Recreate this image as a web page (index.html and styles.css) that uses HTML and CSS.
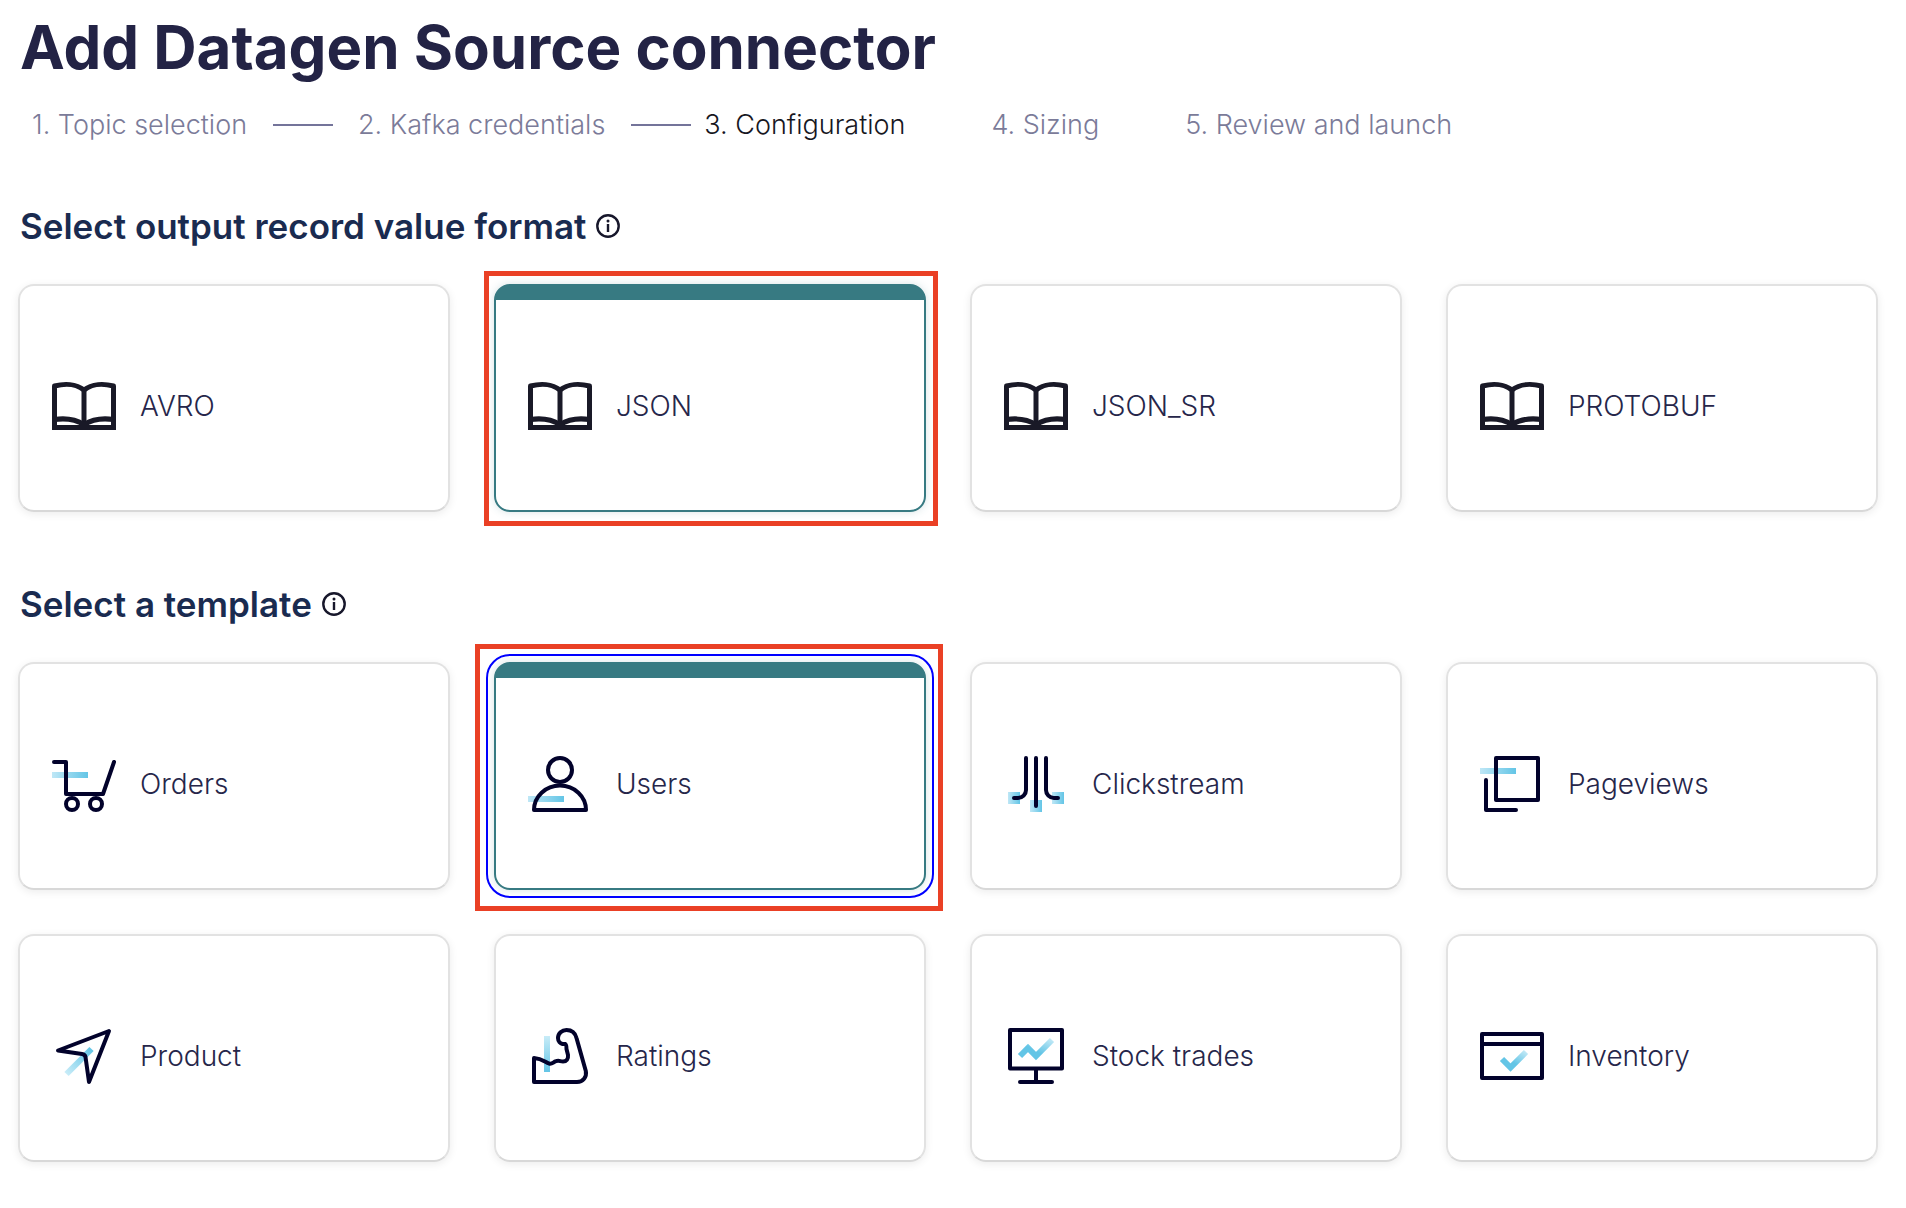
FILE: index.html
```html
<!DOCTYPE html>
<html lang="en">
<head>
<meta charset="utf-8">
<title>Add Datagen Source connector</title>
<meta name="viewport" content="width=device-width, initial-scale=1">
<link rel="stylesheet" href="styles.css">
</head>
<body>
<svg class="defs" width="0" height="0" aria-hidden="true">
  <defs>
    <linearGradient id="fade-right" x1="0" y1="0" x2="1" y2="0">
      <stop offset="0" stop-color="#bfe7f6"/><stop offset="1" stop-color="#63c5e6"/>
    </linearGradient>
    <linearGradient id="fade-down" x1="0" y1="0" x2="0" y2="1">
      <stop offset="0" stop-color="#c8ecf8"/><stop offset="1" stop-color="#63c5e6"/>
    </linearGradient>
    <linearGradient id="fade-up" x1="0" y1="1" x2="1" y2="0">
      <stop offset="0" stop-color="#c8ecf8"/><stop offset="1" stop-color="#63c5e6"/>
    </linearGradient>
    <linearGradient id="fade-out" x1="0" y1="1" x2="1" y2="0">
      <stop offset="0.4" stop-color="#63c5e6"/><stop offset="1" stop-color="#c0e8f6"/>
    </linearGradient>
    <symbol id="book" viewBox="0 0 64 64">
      <g fill="none" stroke="#191927" stroke-width="5" stroke-linejoin="round">
        <path d="M2.500 46V12C12 9.500 24 9.500 32 16C40 9.500 52 9.500 61.500 12V46"/>
        <path d="M32 16V50"/>
        <path d="M2.500 45.500C13 44 24 45.500 32 50.500C40 45.500 51 44 61.500 45.500"/>
        <path d="M2.500 44V53.500H61.500V44" stroke-linejoin="miter"/>
      </g>
    </symbol>
    <symbol id="info" viewBox="0 0 24 24">
      <circle cx="12" cy="12" r="10.700" fill="none" stroke="#17172b" stroke-width="2.400"/>
      <circle cx="12" cy="7" r="1.500" fill="#17172b"/>
      <path d="M12 10V18" stroke="#17172b" stroke-width="2.400"/>
    </symbol>
  </defs>
</svg>

<main class="page">
  <h1 class="title">Add Datagen Source connector</h1>

  <ol class="steps">
    <li class="step step-linked">1. Topic selection</li>
    <li class="step step-linked">2. Kafka credentials</li>
    <li class="step step-current" aria-current="step">3. Configuration</li>
    <li class="step">4. Sizing</li>
    <li class="step">5. Review and launch</li>
  </ol>

  <section class="group" role="radiogroup" aria-labelledby="format-heading">
    <div class="heading-row">
      <h2 class="heading" id="format-heading">Select output record value format</h2>
      <button class="info" type="button" aria-label="About output formats"><svg><use href="#info"/></svg></button>
    </div>
    <div class="cards">
      <label class="card">
        <input class="card-input" type="radio" name="format" value="avro">
        <svg class="icon"><use href="#book"/></svg>
        <span>AVRO</span>
      </label>
      <label class="card">
        <input class="card-input" type="radio" name="format" value="json" checked>
        <svg class="icon"><use href="#book"/></svg>
        <span>JSON</span>
        <i class="callout callout-format"></i>
      </label>
      <label class="card">
        <input class="card-input" type="radio" name="format" value="json_sr">
        <svg class="icon"><use href="#book"/></svg>
        <span>JSON_SR</span>
      </label>
      <label class="card">
        <input class="card-input" type="radio" name="format" value="protobuf">
        <svg class="icon"><use href="#book"/></svg>
        <span>PROTOBUF</span>
      </label>
    </div>
  </section>

  <section class="group" role="radiogroup" aria-labelledby="template-heading">
    <div class="heading-row">
      <h2 class="heading" id="template-heading">Select a template</h2>
      <button class="info" type="button" aria-label="About templates"><svg><use href="#info"/></svg></button>
    </div>
    <div class="cards">
      <label class="card">
        <input class="card-input" type="radio" name="template" value="orders">
        <svg class="icon line-icon" viewBox="0 0 64 64">
          <rect class="tint" x="0" y="20" width="36" height="6"/>
          <path d="M2 10H14V42H51L62 10"/>
          <circle cx="20" cy="52" r="6"/>
          <circle cx="44" cy="52" r="6"/>
        </svg>
        <span>Orders</span>
      </label>
      <label class="card is-focused">
        <input class="card-input" type="radio" name="template" value="users" checked>
        <svg class="icon line-icon" viewBox="0 0 64 64">
          <rect class="tint" x="0" y="44" width="36" height="6"/>
          <circle cx="32" cy="18" r="12"/>
          <path d="M6 58A26 24.500 0 0 1 58 58Z"/>
        </svg>
        <span>Users</span>
        <i class="callout callout-template"></i>
      </label>
      <label class="card">
        <input class="card-input" type="radio" name="template" value="clickstream">
        <svg class="icon line-icon" viewBox="0 0 64 64">
          <rect class="tint" x="4" y="40" width="12" height="12"/>
          <rect class="tint" x="26" y="48" width="12" height="12"/>
          <rect class="tint" x="48" y="40" width="12" height="12"/>
          <path d="M22 6V38A8 8 0 0 1 14 46H10M32 6V54M42 6V38A8 8 0 0 0 50 46H54"/>
        </svg>
        <span>Clickstream</span>
      </label>
      <label class="card">
        <input class="card-input" type="radio" name="template" value="pageviews">
        <svg class="icon line-icon" viewBox="0 0 64 64">
          <rect class="tint" x="0" y="16" width="36" height="6"/>
          <path d="M16 6H58V48H16ZM6 28V58H36"/>
        </svg>
        <span>Pageviews</span>
      </label>
      <label class="card">
        <input class="card-input" type="radio" name="template" value="product">
        <svg class="icon line-icon" viewBox="0 0 64 64">
          <path class="tint-line" stroke="url(#fade-up)" d="M14.500 50L39.500 25"/>
          <path d="M57 7L6 26.500L30 30Q33 30.500 33.500 33L37 58Z"/>
        </svg>
        <span>Product</span>
      </label>
      <label class="card">
        <input class="card-input" type="radio" name="template" value="ratings">
        <svg class="icon line-icon" viewBox="0 0 64 64">
          <rect fill="url(#fade-down)" stroke="none" x="16" y="12" width="6" height="36"/>
          <path d="M6 34V58H49C55 58 59 53 57.800 47L48.500 14C47 8 43 6 38.500 6C34 6 30 9.500 30 14C30 17.500 32.500 19.500 34.500 20H37C38.500 20.500 38.500 23 38.500 25L40 31C40.500 35 38.500 37.500 35 37.500C32 37.500 31 36 28 37.200C25 38.200 24 40.500 21 39.500C17 38 14 34.500 6 34Z"/>
        </svg>
        <span>Ratings</span>
      </label>
      <label class="card">
        <input class="card-input" type="radio" name="template" value="stock">
        <svg class="icon line-icon" viewBox="0 0 64 64">
          <path class="tint-line" stroke="url(#fade-out)" d="M16 32L24 24L32 32L48 16"/>
          <path d="M6 6H58V44.500H6ZM32 46V58M16 58H48"/>
        </svg>
        <span>Stock trades</span>
      </label>
      <label class="card">
        <input class="card-input" type="radio" name="template" value="inventory">
        <svg class="icon line-icon" viewBox="0 0 64 64">
          <path class="tint-line" stroke="url(#fade-out)" d="M22 35L30.500 43.500L46 28"/>
          <path d="M2 10H62V54H2ZM2 20H62"/>
        </svg>
        <span>Inventory</span>
      </label>
    </div>
  </section>
</main>
</body>
</html>
```
FILE: styles.css
```css
* {
  box-sizing: border-box;
}

body {
  margin: 0;
  background: #fff;
  color: #26264a;
  font-family: Inter, "Liberation Sans", sans-serif;
}

.defs {
  position: absolute;
}

.page {
  padding: 11px 28px 44px 18px;
}

.title {
  margin: 0 2px;
  color: #232345;
  font-size: 60px;
  font-weight: 700;
  line-height: 72px;
}

.steps {
  display: flex;
  align-items: center;
  margin: 26px 0 0;
  padding: 0 14px;
  list-style: none;
  color: #7b7b99;
  font-size: 27px;
  font-weight: 300;
  line-height: 32px;
}

.step {
  display: flex;
  align-items: center;
  margin-right: 86px;
  white-space: nowrap;
}

.step-linked {
  margin-right: 25px;
}

.step-linked::after {
  content: "";
  width: 60px;
  height: 2px;
  margin-left: 26px;
  background: #74749a;
}

.step-current {
  margin-left: -12px;
  color: #17171f;
}

.group {
  margin-top: 63px;
}

.group + .group {
  margin-top: 70px;
}

.heading-row {
  display: flex;
  align-items: center;
  gap: 10px;
  margin-bottom: 36px;
  padding-left: 2px;
}

.heading {
  margin: 0;
  color: #1a2b50;
  font-size: 35px;
  font-weight: 600;
  line-height: 44px;
}

.info {
  display: block;
  width: 24px;
  height: 24px;
  padding: 0;
  border: 0;
  background: none;
}

.info svg {
  display: block;
  width: 24px;
  height: 24px;
}

.cards {
  display: grid;
  grid-template-columns: repeat(4, 1fr);
  gap: 44px;
}

.card {
  position: relative;
  display: flex;
  align-items: center;
  gap: 24px;
  min-height: 228px;
  padding: 16px 32px 0;
  border: 2px solid #e2e2e2;
  border-bottom-color: #d8d8d8;
  border-radius: 16px;
  box-shadow: 0 2px 8px rgba(0, 0, 0, 0.08);
  font-size: 28px;
  font-weight: 300;
  line-height: 36px;
}

.card:has(:checked) {
  padding-top: 2px;
  border-color: #377a82;
  border-top-width: 16px;
  box-shadow: 0 0 8px rgba(55, 122, 130, 0.2);
}

.is-focused {
  outline: 2px solid #00f;
  outline-offset: 6px;
}

.card-input {
  position: absolute;
  width: 1px;
  height: 1px;
  margin: 0;
  opacity: 0;
}

.icon {
  flex: none;
  width: 64px;
  height: 64px;
}

.line-icon {
  fill: none;
  stroke: #02022b;
  stroke-width: 4px;
  stroke-linecap: round;
  stroke-linejoin: round;
}

.tint {
  fill: url(#fade-right);
  stroke: none;
}

.tint-line {
  stroke-width: 6px;
  stroke-linecap: butt;
  stroke-linejoin: miter;
}

/* Red annotation frames drawn over the chosen cards */
.callout {
  position: absolute;
  border: 5px solid #ea4025;
  pointer-events: none;
}

.callout-format {
  inset: -29px -14px -16px -12px;
}

.callout-template {
  inset: -34px -19px -23px -21px;
}
```
